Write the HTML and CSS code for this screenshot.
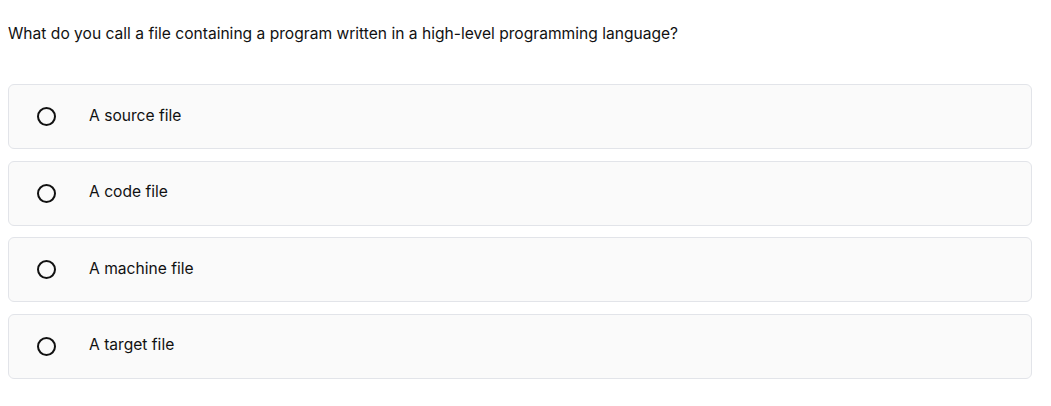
FILE: index.html
```html
<!DOCTYPE html>
<html>
<head>
<meta charset="utf-8">
<link rel="stylesheet" href="styles.css">
</head>
<body>
<div class="quiz">
  <p class="question">What do you call a file containing a program written in a high-level programming language?</p>
  <div class="options">
    <div class="option"><span class="radio"></span><span class="label">A source file</span></div>
    <div class="option"><span class="radio"></span><span class="label">A code file</span></div>
    <div class="option"><span class="radio"></span><span class="label">A machine file</span></div>
    <div class="option"><span class="radio"></span><span class="label">A target file</span></div>
  </div>
</div>
</body>
</html>
```
FILE: styles.css
```css
body {
  margin: 8px;
  font-family: Inter, "Noto Sans", sans-serif;
  color: #111;
  background: #fff;
}
.quiz {
  width: 1024px;
}
.question {
  margin: 15px 0 0 0;
  font-size: 15.6px;
  line-height: 21px;
}
.options {
  margin-top: 40px;
  display: flex;
  flex-direction: column;
  gap: 11.67px;
}
.option {
  display: flex;
  align-items: center;
  height: 63px;
  border: 1px solid #e2e4e9;
  border-radius: 6px;
  background: #fafafa;
  padding-left: 28px;
}
.radio {
  width: 15px;
  height: 15px;
  border: 2px solid #111;
  border-radius: 50%;
  flex: none;
}
.label {
  margin-left: 33px;
  font-size: 15.6px;
  line-height: 20px;
  padding-bottom: 2px;
}
```
